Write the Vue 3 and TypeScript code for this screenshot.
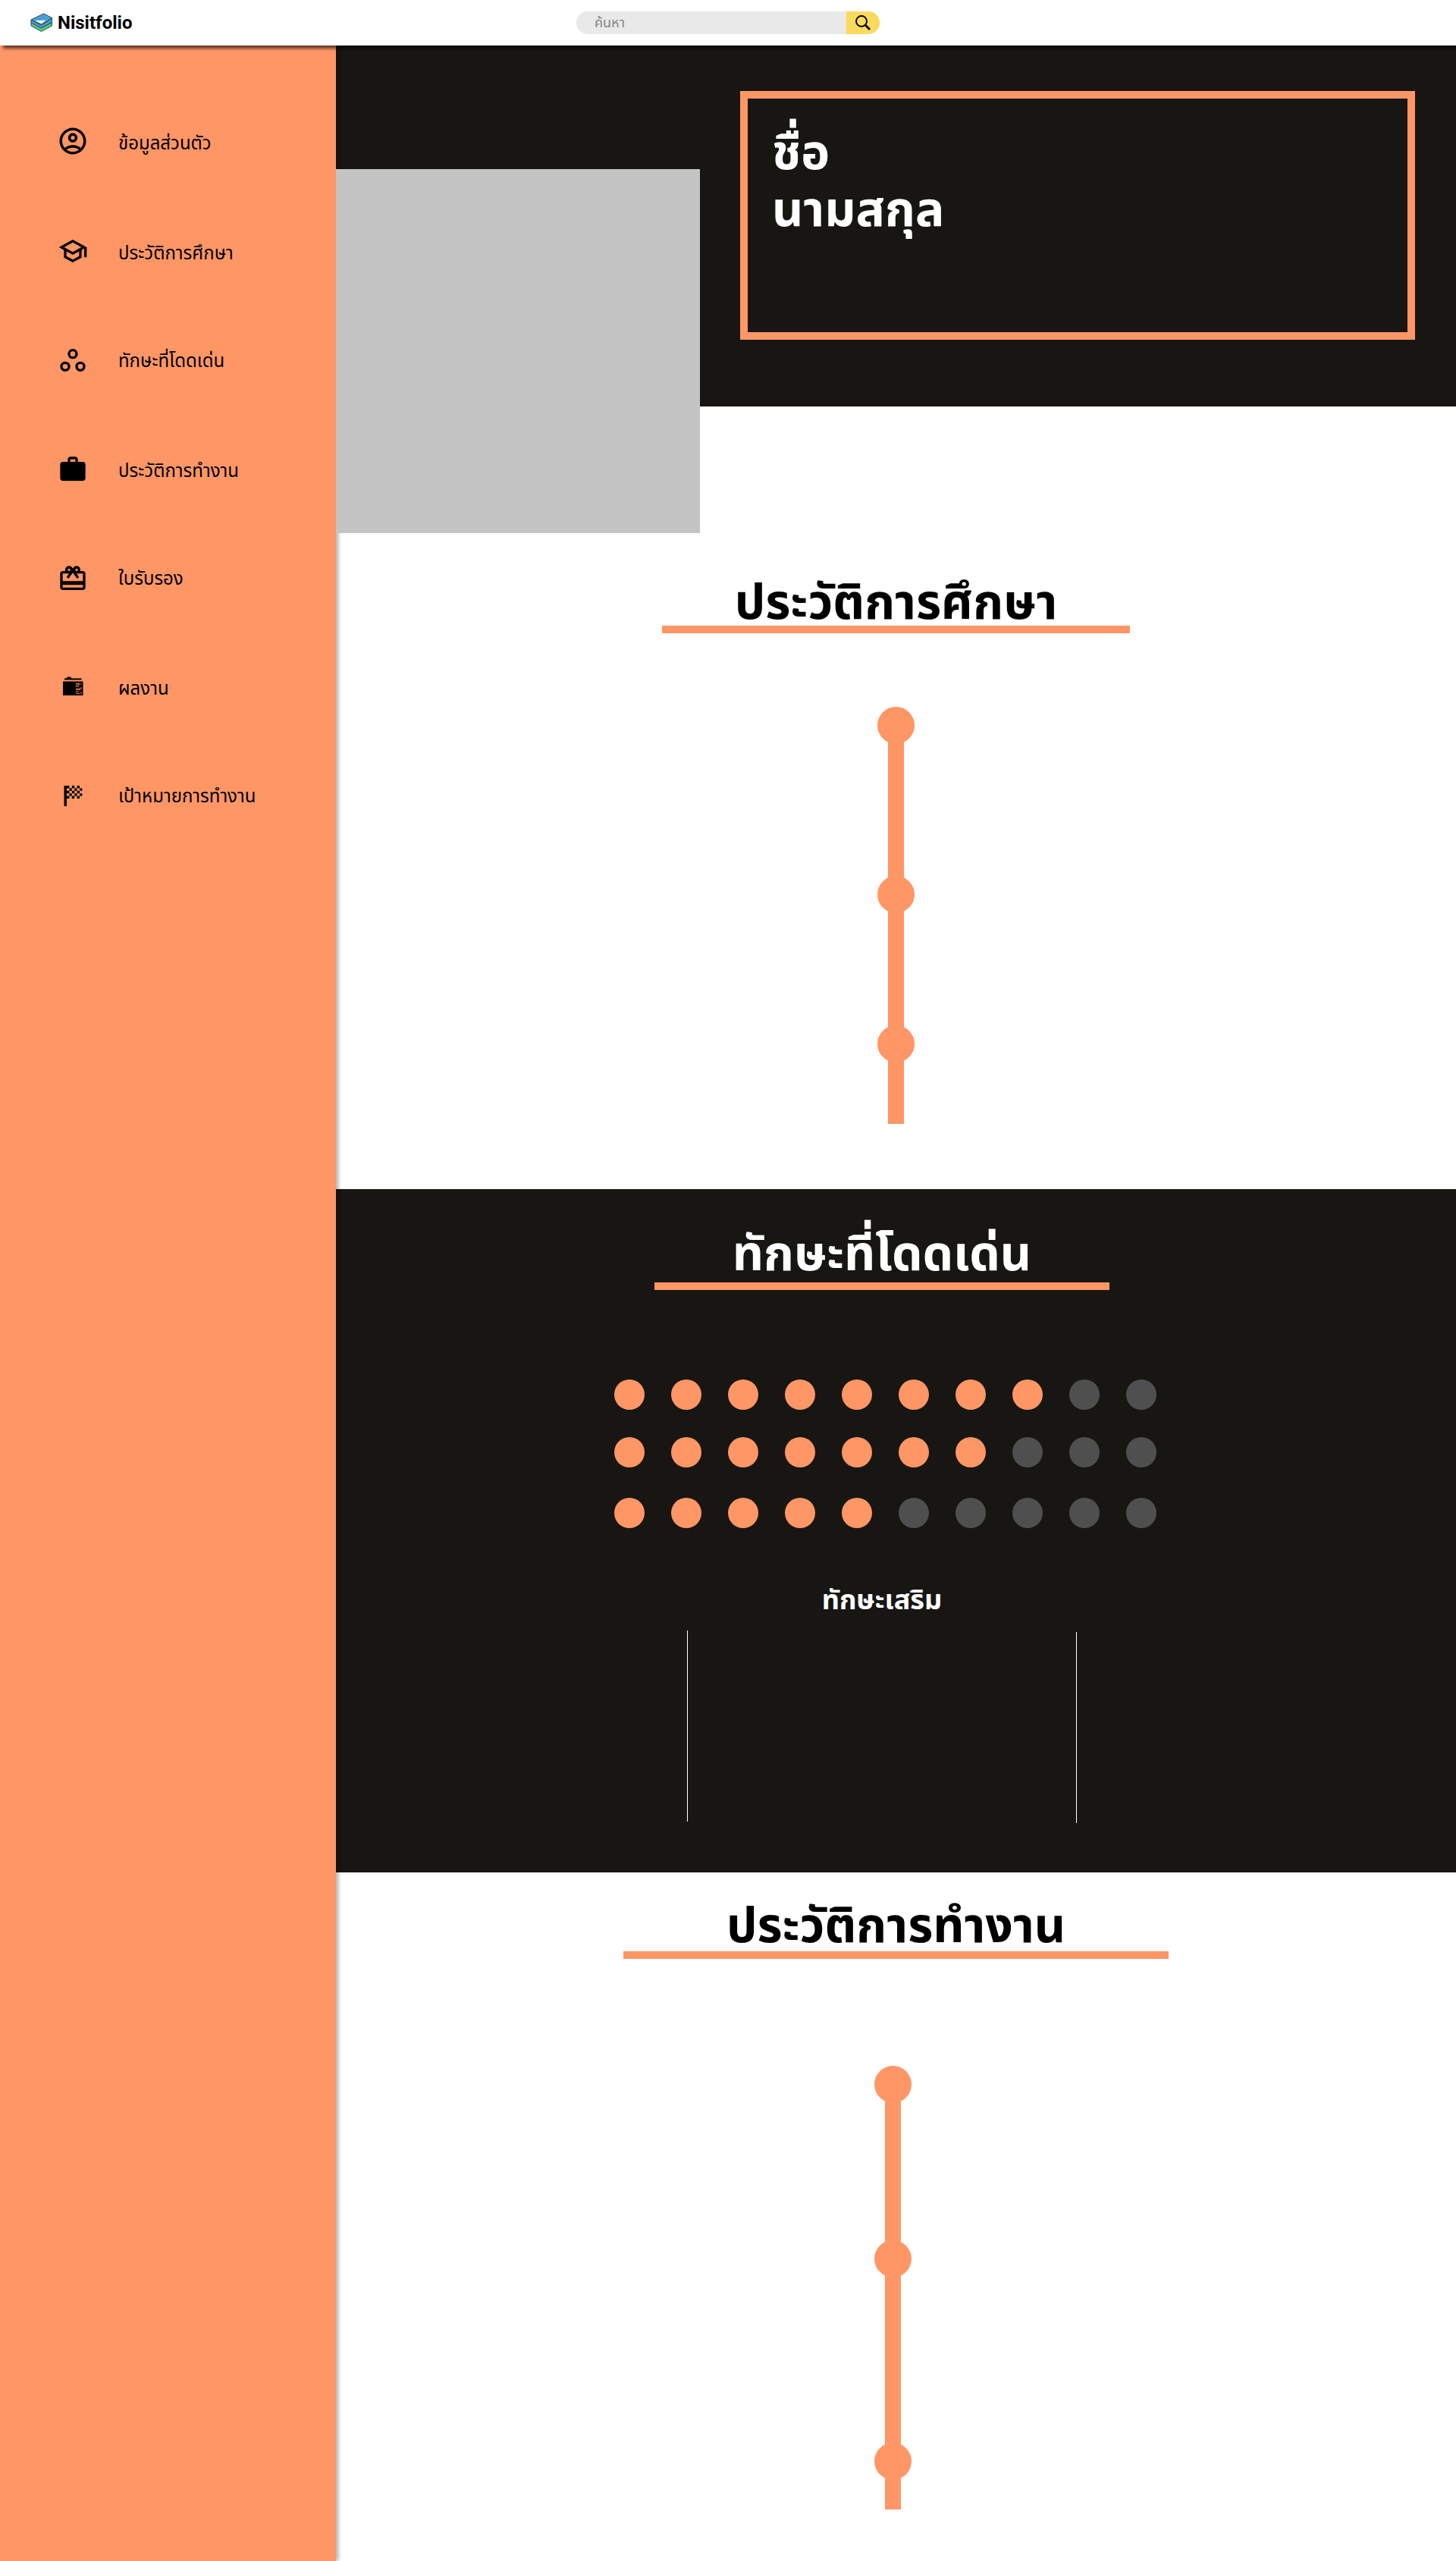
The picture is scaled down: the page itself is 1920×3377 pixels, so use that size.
<script setup lang="ts">
interface NavItem {
  label: string
  icon: string
  gap: number
  iconTop: number
}

const navItems: NavItem[] = [
  { label: 'ข้อมูลส่วนตัว', icon: 'account', gap: 105, iconTop: 0 },
  { label: 'ประวัติการศึกษา', icon: 'school', gap: 102, iconTop: 1 },
  { label: 'ทักษะที่โดดเด่น', icon: 'workspaces', gap: 105, iconTop: 3 },
  { label: 'ประวัติการทำงาน', icon: 'work', gap: 102, iconTop: 2 },
  { label: 'ใบรับรอง', icon: 'redeem', gap: 105, iconTop: 4 },
  { label: 'ผลงาน', icon: 'folder', gap: 102, iconTop: 2 },
  { label: 'เป้าหมายการทำงาน', icon: 'flag', gap: 0, iconTop: 4 },
]

const skills: number[] = [8, 7, 5]
const flagSquares: [number, number][] = []
for (let r = 0; r < 5; r++) {
  for (let c = 0; c < 6; c++) {
    if ((r + c) % 2 === 0) flagSquares.push([14.3 + c * 3.4, 6 + r * 3.4])
  }
}
</script>

<template>
  <div class="page">
    <header class="topbar">
      <div class="brand">
        <svg class="logo" width="30" height="26" viewBox="0 0 30 26">
          <g stroke="#2f4858" stroke-width="1" stroke-linejoin="round">
            <path d="M1 12.500 14.500 20 28.500 12.500V17L14.500 24.500 1 17Z" fill="#4fcf7c" />
            <path d="M1 9 14.500 16.500 28.500 7V12L14.500 20 1 13Z" fill="#4a9fd0" />
            <path d="M1 9 17.500 1 29 6.800 14.500 15.500Z" fill="#4a9fd0" />
          </g>
          <path d="M6 10.200Q13 10.200 20.500 9.800L14.500 14.200Z" fill="#fff" />
        </svg>
        <span class="brand-name">Nisitfolio</span>
      </div>
      <div class="search">
        <span class="search-field">ค้นหา</span>
        <button class="search-button" aria-label="ค้นหา">
          <svg width="20" height="20" viewBox="0 0 20 20" fill="none" stroke="#000">
            <circle cx="8" cy="8" r="7" stroke-width="1.900" />
            <path d="M12.800 12.800 19 19" stroke-width="2.800" />
          </svg>
        </button>
      </div>
    </header>

    <div class="body">
      <nav class="sidebar">
        <a v-for="item in navItems" :key="item.icon" class="nav-item" :style="{ marginBottom: item.gap + 'px' }">
          <svg
            class="nav-icon"
            :class="{ large: item.icon === 'account' }"
            viewBox="0 0 24 24"
            :style="{ marginTop: item.iconTop + 'px' }"
          >
            <path v-if="item.icon === 'account'" fill-rule="evenodd" d="M12 2C6.480 2 2 6.480 2 12s4.480 10 10 10 10-4.480 10-10S17.520 2 12 2zM7.350 18.500C8.660 17.560 10.260 17 12 17s3.340.56 4.650 1.500C15.340 19.440 13.740 20 12 20s-3.340-.56-4.650-1.500zm10.790-1.380C16.450 15.800 14.320 15 12 15s-4.450.8-6.140 2.120C4.700 15.730 4 13.950 4 12c0-4.420 3.580-8 8-8s8 3.580 8 8c0 1.950-.7 3.730-1.860 5.120zM12 6c-1.930 0-3.500 1.570-3.500 3.500S10.070 13 12 13s3.500-1.570 3.500-3.500S13.930 6 12 6zm0 5c-.83 0-1.500-.67-1.500-1.500S11.170 8 12 8s1.500.67 1.500 1.500S12.830 11 12 11z" />
            <path v-else-if="item.icon === 'school'" fill-rule="evenodd" d="M12 3 1 9l4 2.180v6L12 21l7-3.820v-6l2-1.090V17h2V9L12 3zm6.820 6L12 12.720 5.180 9 12 5.280 18.820 9zM17 15.990l-5 2.730-5-2.730v-3.720L12 15l5-2.730v3.720z" />
            <g v-else-if="item.icon === 'workspaces'" fill="none" stroke="#000" stroke-width="2">
              <circle cx="12" cy="7" r="3" />
              <circle cx="6" cy="17" r="3" />
              <circle cx="18" cy="17" r="3" />
            </g>
            <path v-else-if="item.icon === 'work'" fill-rule="evenodd" d="M20 6h-4V4c0-1.110-.89-2-2-2h-4c-1.110 0-2 .89-2 2v2H4c-1.110 0-1.990.89-1.990 2L2 19c0 1.110.89 2 2 2h16c1.110 0 2-.89 2-2V8c0-1.110-.89-2-2-2zm-6 0h-4V4h4v2z" />
            <path v-else-if="item.icon === 'redeem'" fill-rule="evenodd" d="M20 6h-2.180c.11-.31.180-.65.180-1 0-1.660-1.340-3-3-3-1.050 0-1.960.54-2.500 1.350l-.5.67-.5-.68C10.960 2.540 10.050 2 9 2 7.340 2 6 3.340 6 5c0 .35.070.69.180 1H4c-1.110 0-1.990.89-1.990 2L2 19c0 1.110.89 2 2 2h16c1.110 0 2-.89 2-2V8c0-1.110-.89-2-2-2zm-5-2c.55 0 1 .45 1 1s-.45 1-1 1-1-.45-1-1 .45-1 1-1zM9 4c.55 0 1 .45 1 1s-.45 1-1 1-1-.45-1-1 .45-1 1-1zm11 15H4v-2h16v2zm0-5H4V8h5.080L7 10.830 8.620 12 11 8.760l1-1.360 1 1.360L15.380 12 17 10.830 14.920 8H20v6z" />
            <g v-else-if="item.icon === 'folder'" transform="scale(.6)">
              <path d="M9 10.500V8.500h2.500L13 6.500h4l1.500 2H31.500v2Z" />
              <path d="M7 12.500H33.500V31H7Z" />
              <g stroke="#ff9666" stroke-width=".9" fill="none">
                <path d="M24 15.500h4.500v1.500h-4.500M28.500 19h-5M24 22h5.500v1.500h-5.500M28.500 26h-5M24 28.500h4.500v1" />
                <path d="M31 15v2M31 20v3M31 26v3" />
              </g>
            </g>
            <g v-else transform="scale(.6)">
              <path d="M8.500 6h3.500v27H8.500Z" />
              <rect v-for="(s, i) in flagSquares" :key="i" :x="s[0] - 2.300" :y="s[1]" width="3.400" height="3.400" />
            </g>
          </svg>
          <span class="nav-label">{{ item.label }}</span>
        </a>
      </nav>

      <main class="content">
        <section class="hero">
          <div class="photo"></div>
          <div class="name-card">
            <h1 class="name">ชื่อ<br />นามสกุล</h1>
          </div>
        </section>

        <section class="education">
          <h2 class="title">ประวัติการศึกษา</h2>
          <div class="rule rule-education"></div>
          <div class="timeline timeline-education">
            <i class="node"></i><i class="node"></i><i class="node"></i>
          </div>
        </section>

        <section class="skills">
          <h2 class="title">ทักษะที่โดดเด่น</h2>
          <div class="rule rule-skills"></div>
          <div class="ratings">
            <div v-for="(score, r) in skills" :key="r" class="rating">
              <i v-for="n in 10" :key="n" class="dot" :class="{ on: n <= score }"></i>
            </div>
          </div>
          <h3 class="subtitle">ทักษะเสริม</h3>
          <div class="columns">
            <div class="divider"></div>
            <div class="divider second"></div>
          </div>
        </section>

        <section class="work">
          <h2 class="title">ประวัติการทำงาน</h2>
          <div class="rule rule-work"></div>
          <div class="timeline timeline-work">
            <i class="node"></i><i class="node"></i><i class="node"></i>
          </div>
        </section>
      </main>
    </div>
  </div>
</template>

<style>
body {
  margin: 0;
  background: #fff;
}
</style>

<style scoped>
* {
  box-sizing: border-box;
}
.page {
  width: 1920px;
  height: 3377px;
  overflow: hidden;
  display: flex;
  flex-direction: column;
  font-family: 'Noto Sans Thai', 'Noto Sans', sans-serif;
  color: #000;
}
.topbar {
  position: relative;
  z-index: 3;
  flex: none;
  height: 60px;
  padding-left: 40px;
  display: flex;
  align-items: center;
  background: #fff;
  box-shadow: 4px 4px 4px rgba(0, 0, 0, 0.6);
}
.brand {
  width: 720px;
  display: flex;
  align-items: center;
  gap: 6px;
}
.brand-name {
  font: 700 24px/28px Roboto, sans-serif;
}
.search {
  width: 400px;
  height: 30px;
  display: flex;
  border-radius: 15px;
  overflow: hidden;
  background: #e9e9e9;
}
.search-field {
  flex: 1;
  padding-left: 24px;
  font-size: 18px;
  line-height: 31px;
  color: #858585;
}
.search-button {
  width: 44px;
  height: 30px;
  padding: 0;
  border: 0;
  display: flex;
  align-items: center;
  justify-content: center;
  background: #f9da5c;
}
.search-button svg {
  margin-right: 1px;
}
.body {
  flex: 1;
  display: flex;
}
.sidebar {
  position: relative;
  z-index: 1;
  width: 443px;
  flex: none;
  padding: 105px 0 0 76px;
  background: #ff9666;
  box-shadow: 4px 0 4px rgba(0, 0, 0, 0.25);
}
.nav-item {
  height: 40px;
  display: flex;
  align-items: flex-start;
}
.nav-icon {
  width: 40px;
  height: 40px;
  flex: none;
}
.nav-icon.large {
  width: 42px;
  height: 42px;
  margin: 0 -1px;
}
.nav-label {
  margin-left: 40px;
  font-size: 24px;
  line-height: 50px;
  white-space: nowrap;
}
.content {
  flex: 1;
  display: flex;
  flex-direction: column;
}
.hero {
  height: 476px;
  flex: none;
  display: flex;
  align-items: flex-start;
  background: #171613;
}
.photo {
  position: relative;
  z-index: 2;
  width: 480px;
  height: 480px;
  margin-top: 163px;
  background: #c4c4c4;
}
.name-card {
  width: 890px;
  height: 328px;
  margin: 60px 0 0 53px;
  padding: 36px 0 0 32px;
  border: 10px solid #ff9666;
}
.name {
  margin: 0;
  font-size: 64px;
  line-height: 75px;
  font-weight: 700;
  color: #fff;
}
.title {
  margin: 0;
  font-size: 64px;
  line-height: 81px;
  font-weight: 700;
  text-align: center;
  white-space: nowrap;
}
.rule {
  height: 10px;
  background: #ff9666;
}
.education {
  height: 1032px;
  flex: none;
  padding-top: 220px;
}
.rule-education {
  width: 617px;
  margin: -12px 0 97px 430px;
}
.timeline {
  width: 49px;
  display: flex;
  flex-direction: column;
  background: linear-gradient(#ff9666, #ff9666) 14px 10px / 21px 100% no-repeat;
}
.node {
  width: 49px;
  height: 49px;
  flex: none;
  border-radius: 50%;
  background: #ff9666;
}
.timeline-education {
  height: 550px;
  margin-left: 714px;
}
.timeline-education .node:nth-child(2) {
  margin: 174px 0 148px;
}
.skills {
  height: 901px;
  flex: none;
  padding-top: 47px;
  background: #171613;
  color: #fff;
}
.skills .title {
  padding-right: 37px;
}
.rule-skills {
  width: 600px;
  margin: -5px 0 118px 420px;
}
.ratings {
  height: 196px;
  margin-left: 367px;
}
.rating {
  display: flex;
  gap: 35px;
  margin-bottom: 36px;
}
.rating:nth-child(2) {
  margin-bottom: 40px;
}
.dot {
  width: 40px;
  height: 40px;
  border-radius: 50%;
  background: #4f4f4f;
}
.dot.on {
  background: #ff9666;
}
.subtitle {
  margin: 71px 0 0;
  padding-right: 37px;
  font-size: 36px;
  line-height: 50px;
  font-weight: 700;
  text-align: center;
}
.columns {
  margin: 14px 0 0 463px;
  display: flex;
  gap: 512px;
}
.divider {
  width: 1px;
  height: 252px;
  background: #fff;
}
.divider.second {
  margin-top: 2px;
}
.work {
  flex: 1;
  padding-top: 32px;
}
.rule-work {
  width: 719px;
  margin: -9px 0 141px 379px;
}
.timeline-work {
  height: 585px;
  margin-left: 710px;
}
.timeline-work .node:nth-child(2) {
  margin: 181px 0 218px;
}
</style>
